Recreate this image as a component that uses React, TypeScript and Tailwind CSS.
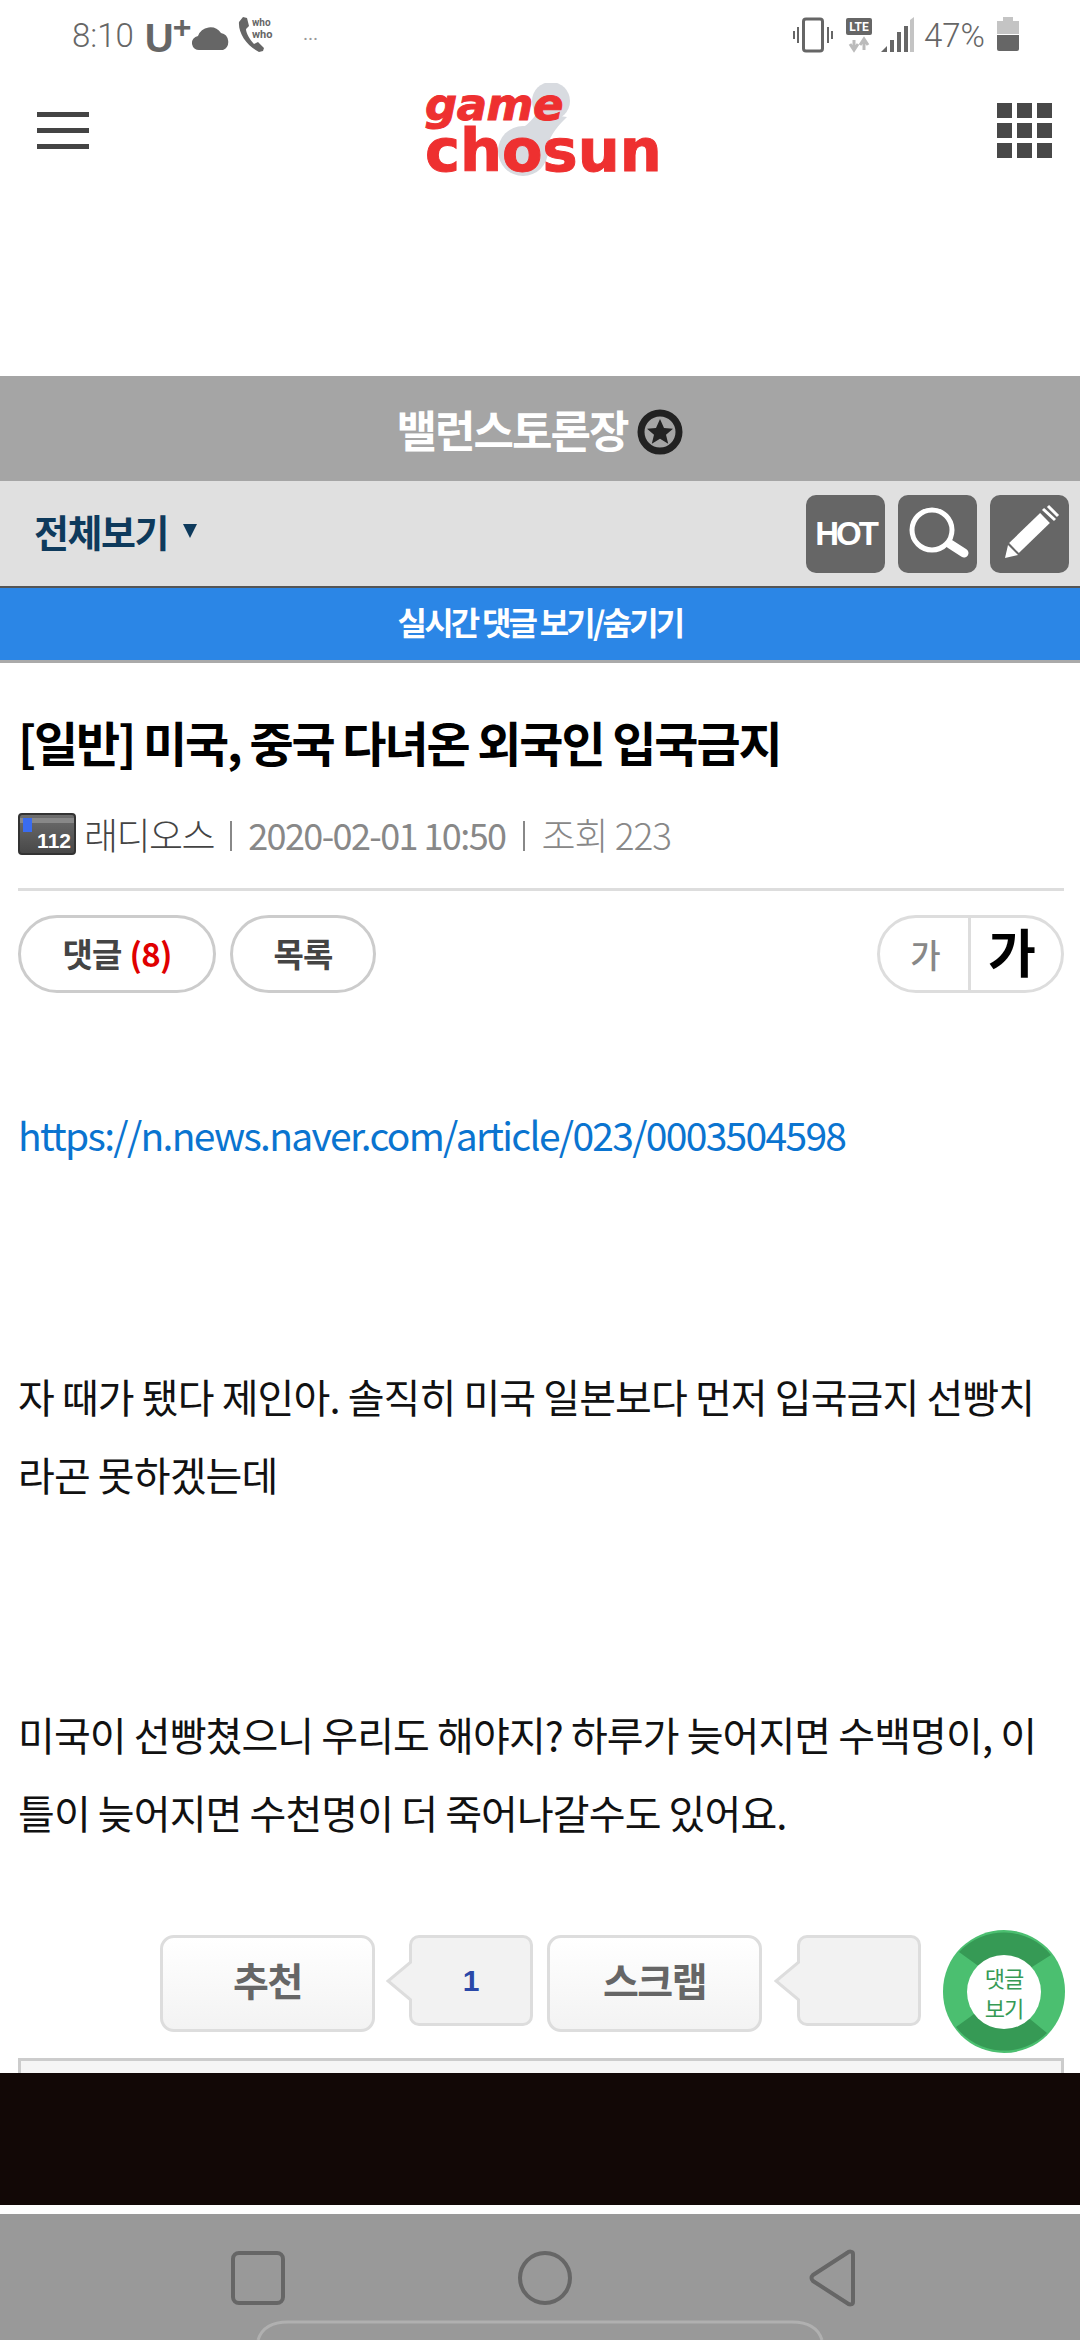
import React from 'react';

const KR = "font-['Noto_Sans_CJK_KR','Noto_Sans',sans-serif]";

const StatusBar = () => (
  <div className="h-[60px] flex items-start justify-between pt-[16px] text-[#666]">
    <div className="flex items-center ml-[72px] h-[38px]">
      <span className="font-['Roboto',sans-serif] font-light text-[33px] leading-none">8:10</span>
      <span className="font-['Liberation_Sans',sans-serif] font-bold text-[40px] leading-none ml-[11px] mt-[6px]">U</span>
      <span className="font-['Liberation_Sans',sans-serif] font-bold text-[32px] leading-none -mt-[16px] -ml-[1px]">+</span>
      <svg width="38" height="26" viewBox="0 0 38 26" className="ml-[1px] mt-[6px]" fill="#666">
        <path d="M8 25a7 7 0 0 1-2-14 13 13 0 0 1 23-3 9 9 0 0 1 2 17z" />
      </svg>
      <svg width="42" height="38" viewBox="0 0 42 38" className="ml-[7px]" fill="none">
        <path d="M2 6c-1 11 8 24 20 30l4-1 1-3-6-6-4 2C13 24 9 17 9 13l3-3-2-8-4-1z" fill="#666" />
        <text x="15" y="10" fontSize="10" fontWeight="700" fill="#666" fontFamily="Roboto, sans-serif">who</text>
        <text x="15" y="22" fontSize="11" fontWeight="700" fill="#666" fontFamily="Roboto, sans-serif">who</text>
      </svg>
      <span className="ml-[24px] text-[14px] leading-none tracking-[1px] text-[#999] font-['Roboto',sans-serif] font-bold">...</span>
    </div>
    <div className="flex items-center mr-[61px] h-[38px]">
      <svg width="40" height="36" viewBox="0 0 40 36" fill="none" stroke="#666">
        <rect x="10.500" y="2" width="19" height="32" rx="2.500" strokeWidth="3" />
        <path d="M5 10v16M1 14v8M35 10v16M39 14v8" strokeWidth="2" />
      </svg>
      <svg width="28" height="36" viewBox="0 0 28 36" className="ml-[12px]">
        <rect x="1" y="1" width="26" height="17" rx="2" fill="#666" />
        <text x="14" y="14" textAnchor="middle" fontSize="12" fontWeight="700" fill="#fff" fontFamily="Roboto, sans-serif">LTE</text>
        <path d="M9 23v8M5 27l4 6 4-6" stroke="#bbb" strokeWidth="3" fill="none" />
        <path d="M19 33v-8M15 28l4-6 4 6" stroke="#bbb" strokeWidth="3" fill="none" />
      </svg>
      <svg width="33" height="36" viewBox="0 0 33 36" className="ml-[8px]">
        <path d="M0 35l6-6v6z" fill="#666" />
        <rect x="9" y="23" width="4" height="12" fill="#666" />
        <rect x="16" y="15" width="4" height="20" fill="#666" />
        <rect x="23" y="9" width="4" height="26" fill="#666" />
        <path d="M29 3l4-3v35h-4z" fill="#c4c4c4" />
      </svg>
      <span className="ml-[10px] font-['Roboto',sans-serif] font-light text-[33px] leading-none">47%</span>
      <div className="ml-[12px] w-[22px] h-[34px] relative flex flex-col mt-[-2px]">
        <div className="mx-auto w-[10px] h-[4px] bg-[#c4c4c4]" />
        <div className="h-[13px] bg-[#c4c4c4]" />
        <div className="h-[17px] bg-[#666] mt-[1px] rounded-b-[2px]" />
      </div>
    </div>
  </div>
);

const Logo = () => (
  <div className="relative w-[236px] h-[95px] font-['DejaVu_Sans',sans-serif] font-bold text-[#ee3030] [-webkit-text-stroke:1px_#ee3030] select-none">
    <svg width="236" height="95" viewBox="0 0 236 95" className="absolute inset-0">
      <circle cx="126" cy="18" r="19" fill="#d8dbe0" />
      <circle cx="98" cy="68" r="25" fill="#d8dbe0" />
      <path d="M112 30l30 4c-8 8-16 16-20 30l-40-12c10-2 22-10 30-22z" fill="#d8dbe0" />
    </svg>
    <span className="absolute left-0 top-[3px] text-[45px] leading-[38px] italic tracking-[-0.5px]">game</span>
    <span className="absolute left-0 top-[42px] text-[59px] leading-[52px]">chosun</span>
  </div>
);

const Header = () => (
  <div className="h-[140px] flex items-center justify-between pl-[37px] pr-[28px]">
    <div className="flex flex-col gap-[11px] w-[52px]">
      <div className="h-[5px] bg-[#444]" />
      <div className="h-[5px] bg-[#444]" />
      <div className="h-[5px] bg-[#444]" />
    </div>
    <Logo />
    <div className="grid grid-cols-3 gap-[5px] w-[55px]">
      {Array.from({ length: 9 }).map((_, i) => (
        <div key={i} className="w-[15px] h-[15px] bg-[#484848]" />
      ))}
    </div>
  </div>
);

const ToolButton = ({ children }: { children: React.ReactNode }) => (
  <div className="w-[79px] h-[78px] rounded-[10px] bg-[#666] flex items-center justify-center text-white">{children}</div>
);

const Pill = ({ children, className = '' }: { children: React.ReactNode; className?: string }) => (
  <div className={`h-[78px] rounded-full border-[3px] border-[#ccc] flex items-center justify-center text-[33px] font-bold text-[#444] tracking-[-0.8px] ${className}`}>
    {children}
  </div>
);

const VoteButton = ({ label }: { label: string }) => (
  <div className="w-[215px] h-[97px] pb-[8px] rounded-[14px] border-[3px] border-[#ddd] bg-gradient-to-b from-white to-[#f3f3f3] flex items-center justify-center text-[39px] font-bold text-[#666] tracking-[-1.5px]">
    {label}
  </div>
);

const VoteCount = ({ value, className = '' }: { value?: string; className?: string }) => (
  <div className={`relative w-[124px] h-[91px] rounded-[10px] border-[3px] border-[#ddd] bg-[#f2f2f2] flex items-center justify-center text-[30px] font-bold text-[#2a48a8] font-['Liberation_Sans',sans-serif] ${className}`}>
    {value}
    <svg width="26" height="42" viewBox="0 0 26 42" className="absolute left-[-26px] top-[22px]">
      <path d="M26 1L2 21l24 20" fill="#f2f2f2" stroke="#ddd" strokeWidth="3" />
    </svg>
  </div>
);

export default function App() {
  return (
    <div className={`relative w-[1080px] h-[2340px] overflow-hidden bg-white flex flex-col ${KR}`}>
      <StatusBar />
      <Header />
      <div className="h-[176px]" />

      <div className="h-[105px] bg-[#a5a5a5] flex items-center justify-center">
        <span className="text-[44px] font-bold text-white tracking-[-2px] leading-none">밸런스토론장</span>
        <svg width="46" height="46" viewBox="0 0 46 46" className="ml-[10px] mt-[6px]">
          <circle cx="23" cy="23" r="19" fill="#a5a5a5" stroke="#222" strokeWidth="7" />
          <path d="M23 10l4 9 9 .8-7 6 2.200 9-8.200-5-8.200 5 2.200-9-7-6 9-.8z" fill="#222" />
        </svg>
      </div>

      <div className="h-[107px] bg-[#e0e0e0] border-b-[2px] border-[#555] flex items-center justify-between pl-[34px] pr-[11px]">
        <div className="flex items-center">
          <span className="text-[38px] font-bold text-[#0e3a5c] tracking-[-1.500px] leading-none mb-[5px]">전체보기</span>
          <div className="ml-[15px] mb-[6px] w-0 h-0 border-x-[7px] border-x-transparent border-t-[14px] border-t-[#0e3a5c]" />
        </div>
        <div className="flex gap-[13px]">
          <ToolButton>
            <span className="font-['Liberation_Sans',sans-serif] font-bold text-[33px] tracking-[-3px] leading-none">HOT</span>
          </ToolButton>
          <ToolButton>
            <svg width="79" height="78" viewBox="0 0 79 78" fill="none" stroke="#fff">
              <circle cx="34" cy="35" r="20" strokeWidth="5" />
              <path d="M52 49l14 9" strokeWidth="9" strokeLinecap="round" />
            </svg>
          </ToolButton>
          <ToolButton>
            <svg width="79" height="78" viewBox="0 0 79 78" fill="none" stroke="#fff">
              <path d="M55 23L24 53" strokeWidth="14" />
              <path d="M15 63l3-13 10 10z" fill="#fff" stroke="none" />
              <path d="M53 14l12 11M58 11l10 10" strokeWidth="3" />
            </svg>
          </ToolButton>
        </div>
      </div>

      <div className="h-[75px] pb-[6px] bg-[#2b86e6] border-b-[3px] border-[#aaa] flex items-center justify-center">
        <span className="text-[32px] font-bold text-white tracking-[-2.800px] leading-none">실시간 댓글 보기/숨기기</span>
      </div>

      <div className="pl-[18px] pr-[16px]">
        <h1 className="mt-[50px] text-[48px] leading-[56px] font-bold text-black tracking-[-2.1px]">[일반] 미국, 중국 다녀온 외국인 입국금지</h1>

        <div className="mt-[44px] flex items-center h-[42px]">
          <div className="relative w-[58px] h-[42px] rounded-[4px] bg-gradient-to-b from-[#6e6e6e] to-[#484848] border-[2px] border-[#333] overflow-hidden">
            <div className="absolute left-0 right-0 top-[3px] h-[5px] bg-[#888]" />
            <div className="absolute left-[3px] top-[3px] w-[9px] h-[14px] bg-[#3a6cf0]" />
            <span className="absolute right-[3px] bottom-[2px] font-['Liberation_Sans',sans-serif] font-bold text-[21px] leading-none text-white">112</span>
          </div>
          <span className="ml-[8px] text-[37px] text-[#444] tracking-[-1.5px] font-light leading-none">래디오스</span>
          <span className="ml-[16px] mr-[16px] mt-[4px] w-[2px] h-[30px] bg-[#888]" />
          <span className="text-[36px] text-[#888] tracking-[-1.6px] leading-none">2020-02-01 10:50</span>
          <span className="ml-[18px] mr-[16px] mt-[4px] w-[2px] h-[30px] bg-[#888]" />
          <span className="text-[37px] text-[#888] tracking-[-1px] leading-none font-light">조회 223</span>
        </div>

        <div className="mt-[33px] h-[3px] bg-[#ddd]" />

        <div className="mt-[24px] flex items-center justify-between">
          <div className="flex gap-[14px]">
            <Pill className="w-[198px]">
              댓글<span className="ml-[8px] text-[#e00000]">(8)</span>
            </Pill>
            <Pill className="w-[146px]">목록</Pill>
          </div>
          <div className="w-[187px] h-[78px] rounded-full border-[3px] border-[#ddd] flex items-center">
            <span className="w-[88px] pl-[3px] text-center text-[33px] font-medium text-[#888] leading-none">가</span>
            <span className="w-[3px] h-full bg-[#ddd]" />
            <span className="flex-1 pr-[8px] pb-[6px] text-center text-[52px] font-bold text-black leading-none">가</span>
          </div>
        </div>

        <p className="mt-[111px] text-[39px] leading-[60px] text-[#0a74d0] tracking-[-1.7px]">https://n.news.naver.com/article/023/0003504598</p>

        <div className="mt-[193px] text-[40px] leading-[78px] text-[#111] tracking-[-0.9px] whitespace-nowrap">
          <p>자 때가 됐다 제인아. 솔직히 미국 일본보다 먼저 입국금지 선빵치</p>
          <p>라곤 못하겠는데</p>
        </div>

        <div className="mt-[182px] text-[40px] leading-[78px] text-[#111] tracking-[-0.9px] whitespace-nowrap">
          <p>미국이 선빵쳤으니 우리도 해야지? 하루가 늦어지면 수백명이, 이</p>
          <p>틀이 늦어지면 수천명이 더 죽어나갈수도 있어요.</p>
        </div>
      </div>

      <div className="absolute left-0 right-0 top-[1935px] pl-[160px] flex items-start">
        <VoteButton label="추천" />
        <VoteCount value="1" className="ml-[34px]" />
        <div className="ml-[14px]"><VoteButton label="스크랩" /></div>
        <VoteCount className="ml-[35px]" />
      </div>

      <div className="absolute left-[943px] top-[1930px] w-[122px] h-[123px] rounded-full bg-[#4bbf70] overflow-hidden flex items-center justify-center">
        <svg width="122" height="123" viewBox="0 0 122 123" className="absolute inset-0">
          <path d="M16 22A61 61 0 0 1 108 25L89 37 61 61 34 35z" fill="#369a55" />
          <path d="M13 97A61 61 0 0 0 104 103L87 89 61 61 27 87z" fill="#369a55" />
        </svg>
        <div className="relative w-[74px] h-[74px] rounded-full bg-white flex flex-col items-center justify-center text-[22px] leading-[30px] text-[#369a55] tracking-[-1px]">
          <span>댓글</span>
          <span>보기</span>
        </div>
      </div>

      <div className="absolute left-[18px] right-[16px] top-[2058px] h-[20px] border-[3px] border-[#ccc] bg-[#f5f5f5]" />

      <div className="absolute left-0 right-0 top-[2073px] h-[132px] bg-[#120806]" />

      <div className="absolute left-0 right-0 top-[2214px] bottom-0 bg-[#999] flex justify-center">
        <svg width="1080" height="126" viewBox="0 0 1080 126" fill="none" stroke="#666" strokeWidth="4">
          <rect x="233" y="39" width="50" height="50" rx="6" />
          <circle cx="545" cy="64" r="25" />
          <path d="M853 40v48c0 3-4 3-6 1l-34-22c-2-2-2-4 0-6l34-22c2-2 6-2 6 1z" strokeLinejoin="round" />
          <path d="M258 126c4-13 14-18 30-18h504c16 0 26 5 30 18" stroke="#b0b0b0" strokeWidth="3" />
        </svg>
      </div>
    </div>
  );
}
